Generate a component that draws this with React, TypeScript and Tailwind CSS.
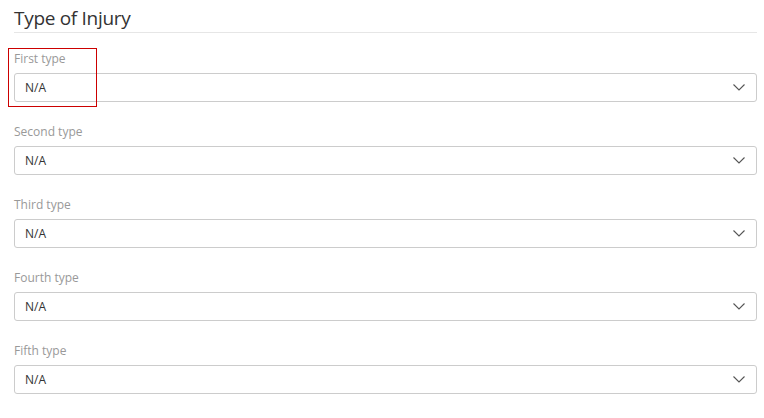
import React from 'react';

const fields = ['First type', 'Second type', 'Third type', 'Fourth type', 'Fifth type'];

function Chevron() {
  return (
    <svg width="12" height="7" viewBox="0 0 12 7" fill="none" className="shrink-0">
      <path d="M0.5 0.5 L6 6 L11.5 0.5" stroke="#555" strokeWidth="1.1" />
    </svg>
  );
}

export default function App() {
  return (
    <div className="relative min-h-[418px] bg-white pl-[14px] pr-[7px] pt-[5px] font-['Open_Sans',sans-serif]">
      <h2 className="border-b border-[#e6e6e6] text-[19px] leading-[27px] font-normal tracking-[-0.3px] text-[#333]">Type of Injury</h2>

      <div className="pt-[17px]">
        {fields.map((f) => (
          <div key={f} className="mb-[21px]">
            <label className="block text-[12px] leading-[18px] text-[#999]">{f}</label>
            <div className="mt-[5px] flex h-[29px] items-center justify-between rounded-[3px] border border-[#ccc] pl-[10px] pr-[11px]">
              <span className="text-[12px] text-[#333]">N/A</span>
              <Chevron />
            </div>
          </div>
        ))}
      </div>

      {/* highlight annotation */}
      <div className="pointer-events-none absolute left-[8px] top-[48px] h-[59px] w-[89px] border border-[#cc0000]" />
    </div>
  );
}
